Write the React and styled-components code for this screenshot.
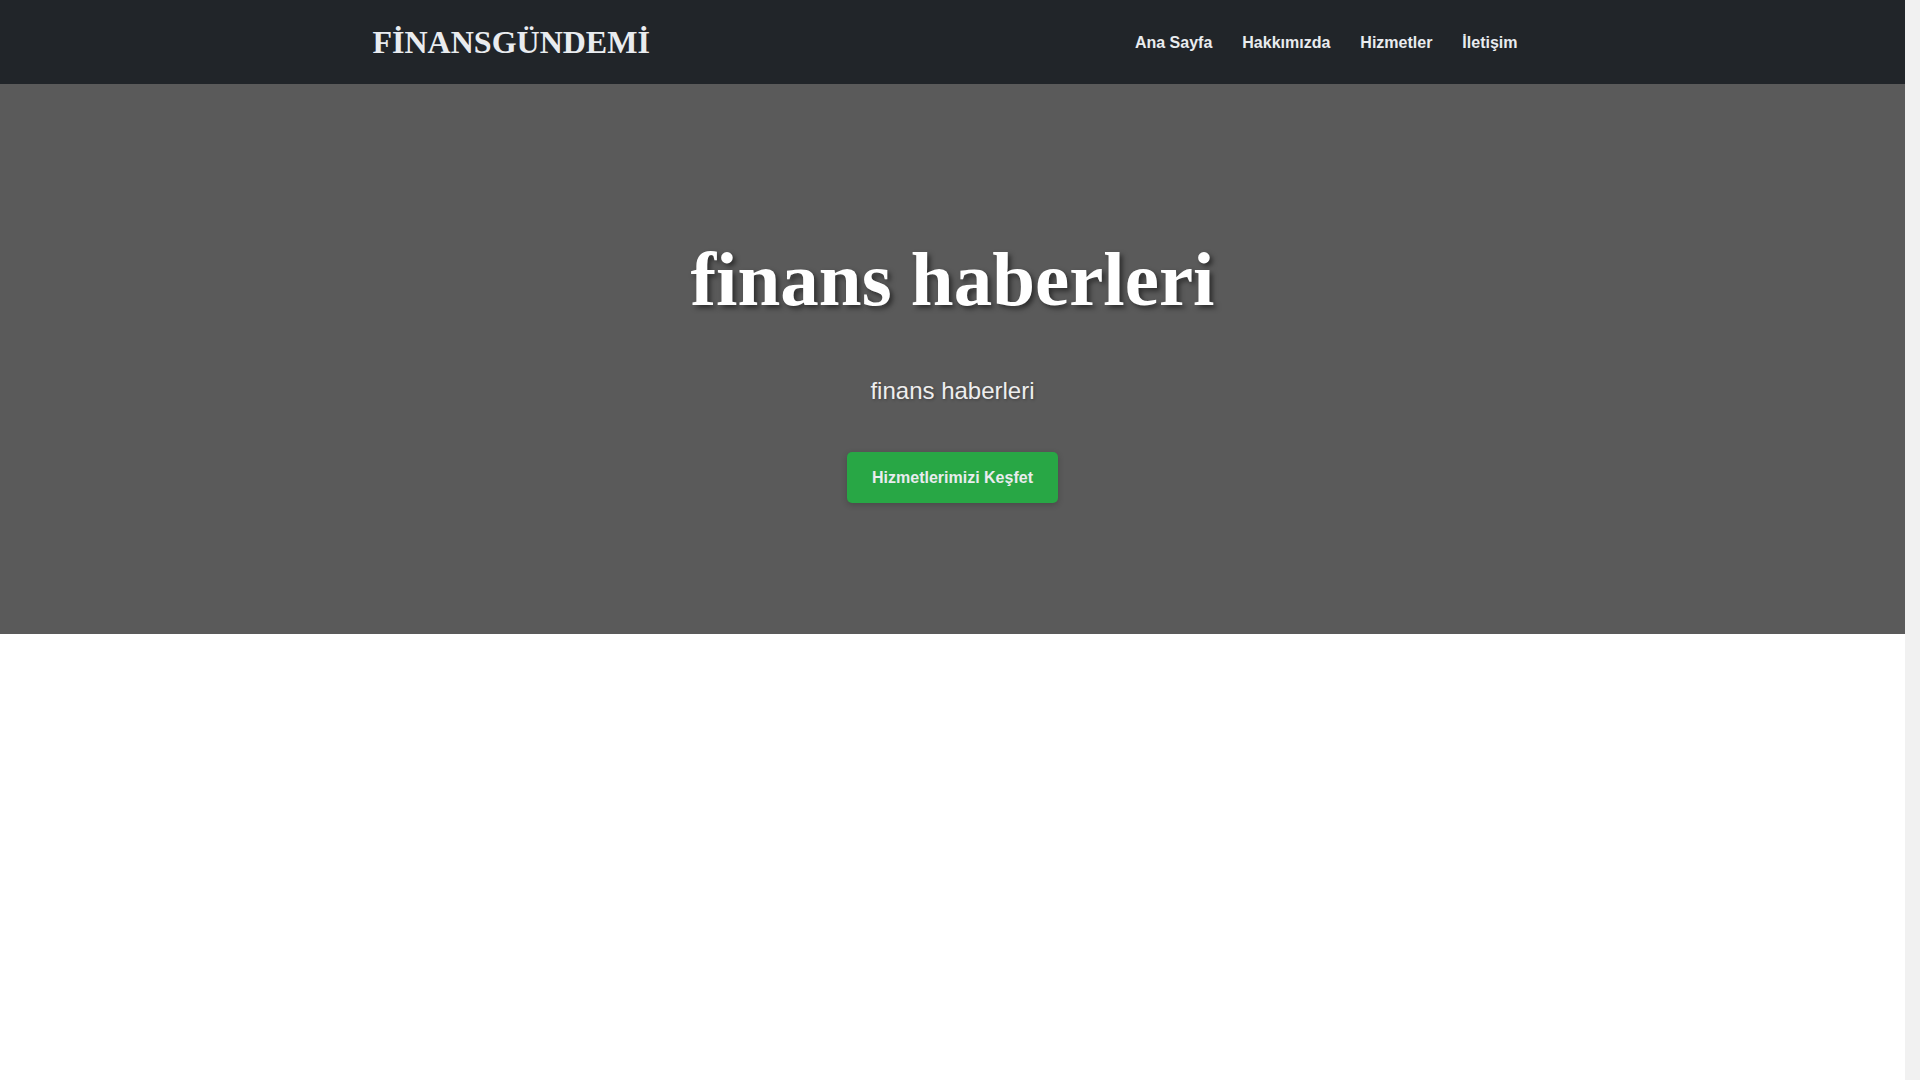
import React from 'react';
import styled, { createGlobalStyle } from 'styled-components';

const GlobalStyle = createGlobalStyle`
  * {
    box-sizing: border-box;
  }

  body {
    margin: 0;
    padding-right: 15px;
    font-family: 'Liberation Sans', Arial, sans-serif;
    background: #f1f1f1;
    color: #212529;
  }
`;

const Page = styled.div`
  background: #ffffff;
`;

const Header = styled.header`
  background: #212529;
`;

const Container = styled.div`
  max-width: 1200px;
  margin: 0 auto;
  padding: 0 20px;
`;

const NavBar = styled(Container)`
  height: 84px;
  display: flex;
  align-items: center;
  justify-content: space-between;
`;

const Brand = styled.a`
  font-family: 'Liberation Serif', 'Times New Roman', serif;
  font-size: 32px;
  font-weight: 700;
  color: #e9ecef;
  text-decoration: none;
`;

const NavList = styled.ul`
  display: flex;
  list-style: none;
  margin: 0;
  padding: 0;
`;

const NavLink = styled.a`
  display: block;
  padding: 1px 15px 0;
  font-size: 16px;
  font-weight: 700;
  color: #e9ecef;
  text-decoration: none;
`;

const Hero = styled.section`
  background: #5a5a5a;
  text-align: center;
  padding: 149px 20px 131px;
`;

const Title = styled.h1`
  font-family: 'Liberation Serif', 'Times New Roman', serif;
  font-size: 77px;
  line-height: 1.2;
  font-weight: 700;
  color: #ffffff;
  margin: 0 0 48px;
  text-shadow: 3px 3px 5px rgba(0, 0, 0, 0.5);
`;

const Subtitle = styled.p`
  font-size: 24px;
  line-height: 36px;
  color: #eeeeee;
  margin: 0 0 43px;
  text-shadow: 1px 1px 3px rgba(0, 0, 0, 0.3);
`;

const CtaButton = styled.a`
  display: inline-block;
  background: #28a745;
  color: #e9ecef;
  font-size: 16px;
  font-weight: 700;
  line-height: 19px;
  padding: 16px 25px;
  border-radius: 5px;
  text-decoration: none;
  box-shadow: 0 2px 6px rgba(0, 0, 0, 0.2);
`;

const Content = styled.main`
  min-height: 720px;
`;

const links = ['Ana Sayfa', 'Hakkımızda', 'Hizmetler', 'İletişim'];

const App = () => {
  return (
    <Page>
      <GlobalStyle />
      <Header>
        <NavBar>
          <Brand href="#">FİNANSGÜNDEMİ</Brand>
          <NavList>
            {links.map((label) => (
              <li key={label}>
                <NavLink href="#">{label}</NavLink>
              </li>
            ))}
          </NavList>
        </NavBar>
      </Header>
      <Hero>
        <Title>finans haberleri</Title>
        <Subtitle>finans haberleri</Subtitle>
        <CtaButton href="#">Hizmetlerimizi Keşfet</CtaButton>
      </Hero>
      <Content />
    </Page>
  );
};

export default App;
